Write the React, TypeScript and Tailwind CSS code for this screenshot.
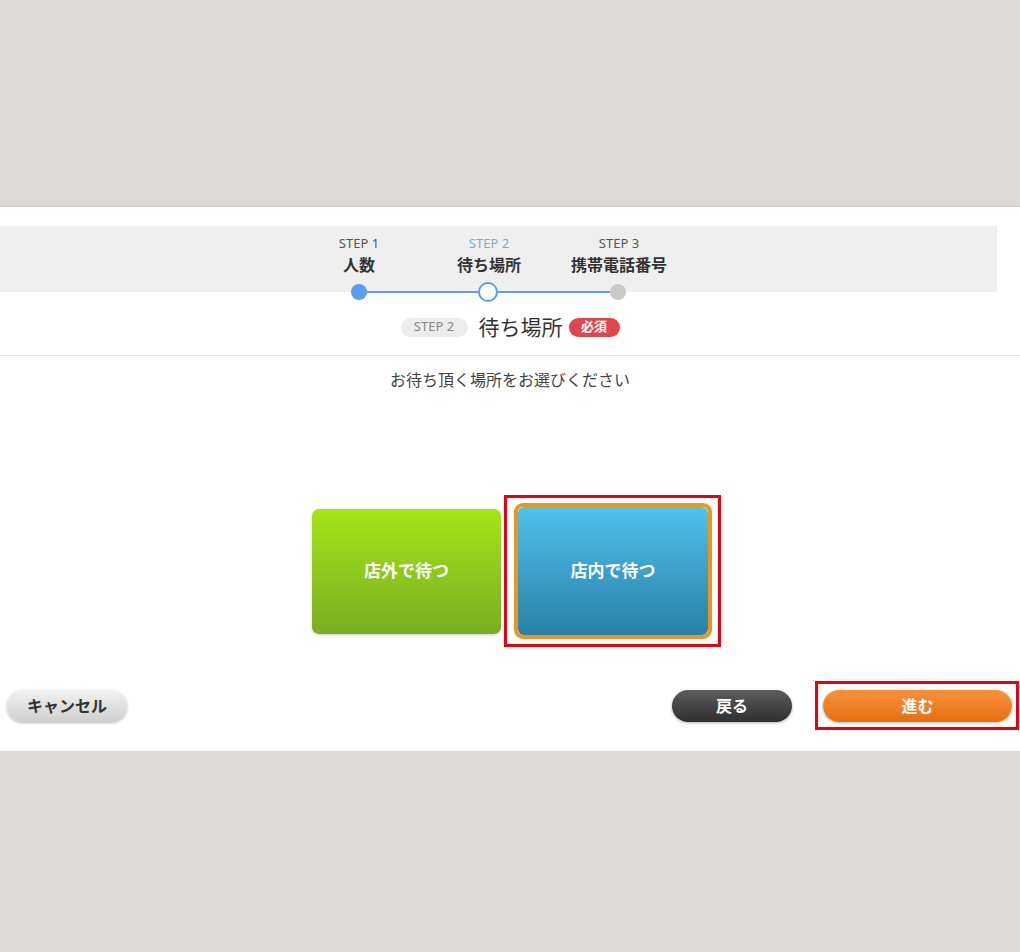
import React from "react";

const font = { fontFamily: '"Noto Sans", "Noto Sans CJK JP", sans-serif' };

const steps = [
  { no: "STEP 1", name: "人数", active: false },
  { no: "STEP 2", name: "待ち場所", active: true },
  { no: "STEP 3", name: "携帯電話番号", active: false },
];

export default function App() {
  return (
    <div className="w-[1020px] h-[952px] bg-[#dcdbd9] flex flex-col" style={font}>
      <div className="h-[207px] shrink-0" />

      <div className="h-[544px] bg-white flex flex-col shrink-0 shadow-[0_-1px_2px_rgba(0,0,0,0.08)]">
        {/* Step header */}
        <div className="mt-[19px] h-[66px] w-[997px] bg-[#efefef] flex pl-[294px]">
          {steps.map((s) => (
            <div key={s.no} className="w-[130px] flex flex-col items-center pt-[9px]">
              <span className={`text-[13px] leading-[16px] ${s.active ? "text-[#7fa6e0]" : "text-[#555]"}`}>{s.no}</span>
              <span className="mt-[4px] text-[16px] leading-[21px] font-bold text-[#333]">{s.name}</span>
            </div>
          ))}
        </div>

        {/* Progress dots */}
        <div className="-mt-[10px] h-[20px] flex items-center pl-[351px]">
          <div className="w-[16px] h-[16px] rounded-full bg-[#5b9cf0]" />
          <div className="w-[111px] h-[2px] bg-[#5b9cf0]" />
          <div className="w-[20px] h-[20px] rounded-full bg-white border-2 border-[#5b9cf0]" />
          <div className="w-[112px] h-[2px] bg-[#5b9cf0]" />
          <div className="w-[16px] h-[16px] rounded-full bg-[#c9c9c9]" />
        </div>

        {/* Title */}
        <div className="mt-[15px] h-[20px] flex items-center justify-center">
          <span className="w-[67px] h-[19px] rounded-full bg-[#ececec] text-[#888] text-[13px] flex items-center justify-center">STEP 2</span>
          <span className="ml-[11px] text-[21px] leading-[20px] text-[#333]">待ち場所</span>
          <span className="ml-[6px] w-[51px] h-[19px] rounded-full bg-[#e0474c] text-white text-[13px] font-bold flex items-center justify-center">必須</span>
        </div>

        <div className="mt-[18px] h-px bg-[#e6e6e6]" />

        <p className="mt-[14px] text-center text-[16px] leading-[20px] text-[#444]">お待ち頂く場所をお選びください</p>

        {/* Choices */}
        <div className="mt-[105px] flex items-center justify-center pl-[13px]">
          <button className="w-[189px] h-[125px] rounded-[7px] bg-gradient-to-b from-[#a4e614] to-[#7aad22] text-white text-[17px] font-bold shadow-[0_1px_3px_rgba(0,0,0,0.2)]">
            店外で待つ
          </button>
          <div className="ml-[3px] border-[3px] border-[#e60012] pt-[5px] pb-[5px] pl-[7px] pr-[6px]">
            <div className="w-[198px] h-[136px] rounded-[9px] border-[4px] border-[#e8961e]">
              <button className="w-full h-full rounded-[6px] bg-gradient-to-b from-[#4fc2ec] to-[#2a80a6] text-white text-[17px] font-bold">
                店内で待つ
              </button>
            </div>
          </div>
        </div>

        {/* Bottom buttons */}
        <div className="mt-[34px] h-[49px] flex items-center pl-[7px] pr-[1px]">
          <button className="w-[120px] h-[32px] rounded-full bg-gradient-to-b from-[#f2f2f2] to-[#cfcfcf] text-[#333] text-[16px] font-bold shadow-[0_1px_3px_rgba(0,0,0,0.3)]">
            キャンセル
          </button>
          <button className="ml-auto w-[120px] h-[32px] rounded-full bg-gradient-to-b from-[#5e5e5e] to-[#2f2f2f] text-white text-[16px] font-bold shadow-[0_1px_3px_rgba(0,0,0,0.3)]">
            戻る
          </button>
          <div className="ml-[23px] border-[3px] border-[#e60012] pt-[6px] pb-[5px] pl-[5px] pr-[4px]">
            <button className="w-[189px] h-[32px] rounded-full bg-gradient-to-b from-[#f7923a] to-[#e66f0c] text-white text-[16px] font-bold shadow-[0_1px_3px_rgba(0,0,0,0.3)]">
              進む
            </button>
          </div>
        </div>
      </div>
    </div>
  );
}
